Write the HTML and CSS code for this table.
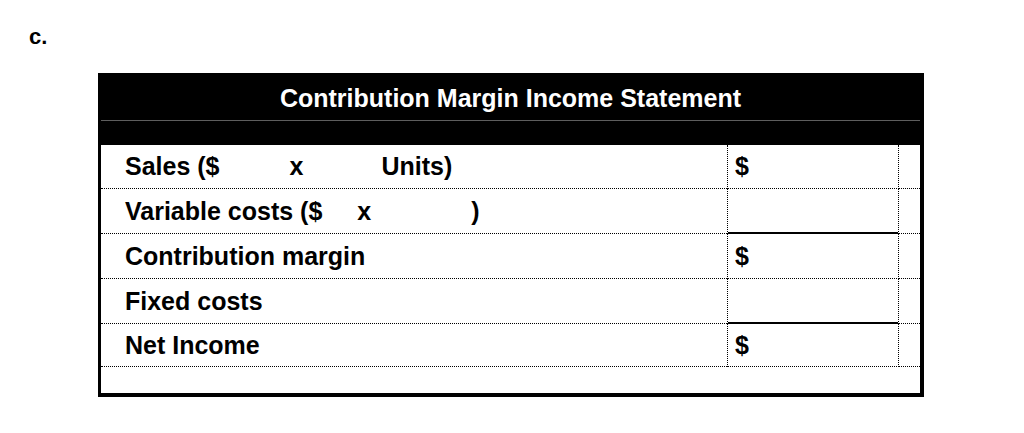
FILE: index.html
```html
<!DOCTYPE html>
<html lang="en">
<head>
<meta charset="utf-8">
<title>Contribution Margin Income Statement</title>
<link rel="stylesheet" href="styles.css">
</head>
<body>
<div class="page">
  <p class="part">c.</p>
  <div class="statement">
    <div class="head">
      <div class="title">Contribution Margin Income Statement</div>
      <div class="subband"></div>
    </div>
    <div class="rows">
      <div class="row r44">
        <div class="label">Sales ($<span class="blank w-a"></span>x<span class="blank w-b"></span>Units)</div>
        <div class="amt">$</div>
        <div class="extra"></div>
      </div>
      <div class="row r45">
        <div class="label">Variable costs ($<span class="blank w-c"></span>x<span class="blank w-d"></span>)</div>
        <div class="amt total-line"></div>
        <div class="extra"></div>
      </div>
      <div class="row r45">
        <div class="label">Contribution margin</div>
        <div class="amt">$</div>
        <div class="extra"></div>
      </div>
      <div class="row r45">
        <div class="label">Fixed costs</div>
        <div class="amt total-line"></div>
        <div class="extra"></div>
      </div>
      <div class="row r43">
        <div class="label">Net Income</div>
        <div class="amt">$</div>
        <div class="extra"></div>
      </div>
      <div class="tail"></div>
    </div>
  </div>
</div>
</body>
</html>
```
FILE: styles.css
```css
html, body {
  margin: 0;
  padding: 0;
  background: #fff;
}

body {
  font-family: "Liberation Sans", Arial, sans-serif;
  color: #000;
}

.page {
  padding: 24px 0 0 29px;
}

.part {
  margin: 0;
  font-size: 22px;
  line-height: 26px;
  font-weight: bold;
}

.statement {
  margin: 23px 0 0 69px;
  width: 826px;
  box-sizing: border-box;
  border: 3px solid #000;
  border-right-width: 4px;
  border-bottom-width: 4px;
  background: #fff;
}

.head {
  background: #000;
}

.title {
  height: 44px;
  border-bottom: 1px solid #5e5e5e;
  color: #fff;
  font-size: 25px;
  font-weight: bold;
  line-height: 44px;
  text-align: center;
}

.subband {
  height: 24px;
}

.row {
  display: grid;
  grid-template-columns: 626px 172px 1fr;
}

.r44 { height: 44px; }
.r45 { height: 45px; }
.r43 { height: 43px; }

.row > div {
  box-sizing: border-box;
  border-bottom: 1px dotted #000;
}

.label {
  padding-left: 24px;
  font-size: 25px;
  font-weight: bold;
  display: flex;
  align-items: center;
  white-space: pre;
}

.blank {
  display: inline-block;
}

.w-a { width: 70px; }
.w-b { width: 78px; }
.w-c { width: 35px; }
.w-d { width: 100px; }

.amt {
  border-left: 1px dotted #000;
  border-right: 1px dotted #000;
  padding-left: 7px;
  font-size: 25px;
  font-weight: bold;
  display: flex;
  align-items: center;
}

.row > .amt.total-line {
  border-bottom: 2px solid #000;
}

.tail {
  height: 26px;
}
```
